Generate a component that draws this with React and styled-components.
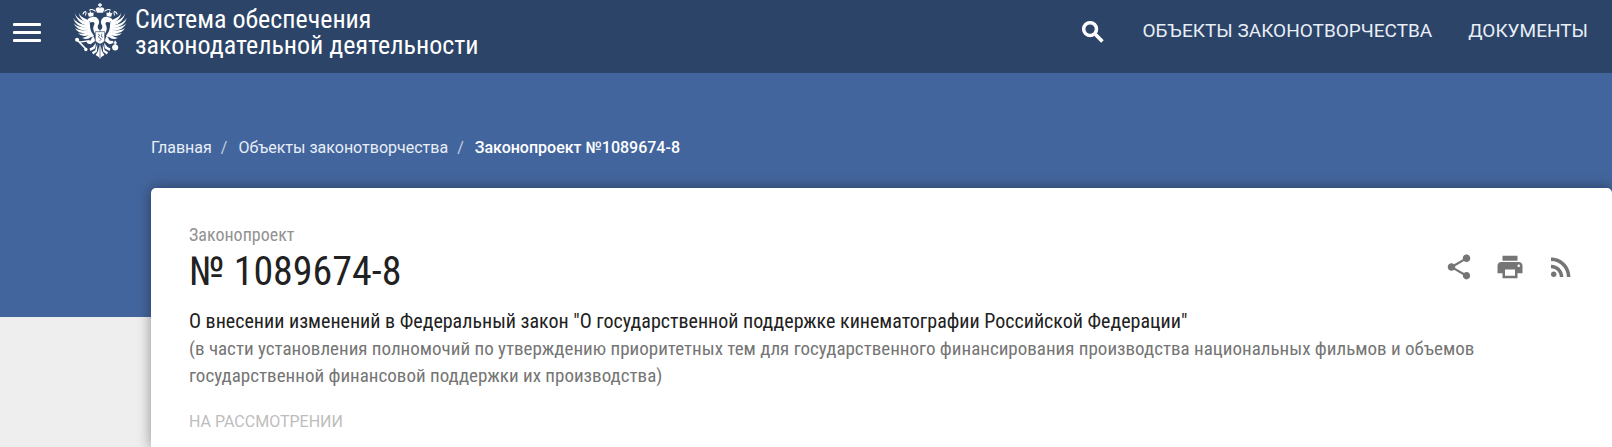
import React from "react";
import styled, { createGlobalStyle } from "styled-components";
import { MdSearch, MdShare, MdPrint, MdRssFeed } from "react-icons/md";

const condensed = `"Roboto Condensed", Roboto, "Liberation Sans", sans-serif`;

const GlobalStyle = createGlobalStyle`
  * {
    box-sizing: border-box;
  }

  body {
    margin: 0;
    background: #eeeeee;
    font-family: Roboto, "Liberation Sans", sans-serif;
    overflow-x: hidden;
  }
`;

const Header = styled.header`
  display: flex;
  align-items: flex-start;
  padding: 0 24px 0 13px;
  min-height: 73px;
  background: #2c4467;
  color: #fff;
`;

const IconButton = styled.button`
  display: flex;
  padding: 0;
  border: 0;
  background: none;
  color: inherit;
  cursor: pointer;
`;

const SearchButton = styled(IconButton)`
  padding-top: 2px;

  path:last-child {
    stroke: currentColor;
    stroke-width: 1;
  }
`;

const MenuButton = styled(IconButton)`
  flex-direction: column;
  gap: 5px;
  width: 28px;
  margin: 23px 32px 0 0;
`;

const MenuLine = styled.span`
  width: 100%;
  height: 3px;
  border-radius: 1px;
  background: #fff;
`;

const Brand = styled.a`
  display: flex;
  gap: 8px;
  padding-top: 3px;
  color: #fff;
  text-decoration: none;
`;

const EmblemSvg = styled.svg`
  width: 54px;
  height: 56px;
  flex: none;
`;

const BrandName = styled.span`
  padding-top: 3px;
  font-family: ${condensed};
  font-size: 26px;
  line-height: 26px;
`;

const Nav = styled.nav`
  display: flex;
  align-items: center;
  gap: 36px;
  margin: 16px 0 0 auto;
`;

const NavLink = styled.a`
  color: #e8eef7;
  font-size: 19px;
  line-height: 28px;
  text-transform: uppercase;
  text-decoration: none;
`;

const Hero = styled.div`
  height: 244px;
  padding: 64px 0 0 151px;
  background: #43659d;
`;

const Breadcrumbs = styled.nav`
  display: flex;
  font-size: 16px;
  line-height: 22px;
`;

const Crumb = styled.a`
  color: ${(props) => (props.$current ? "#fff" : "#e8eef7")};
  font-weight: ${(props) => (props.$current ? 500 : 400)};
  text-decoration: none;

  &:not(:last-child)::after {
    content: "/";
    margin: 0 11px 0 9px;
    color: #c3cfe2;
  }
`;

const Card = styled.main`
  position: relative;
  margin: -129px 0 0 151px;
  padding: 34px 36px 16px 38px;
  border-radius: 5px 5px 0 0;
  background: #fff;
  box-shadow: 0 0 14px rgba(0, 0, 0, 0.4);
  font-family: ${condensed};
`;

const CardTop = styled.div`
  display: flex;
  justify-content: space-between;
  align-items: flex-end;
`;

const Kind = styled.div`
  color: #929292;
  font-size: 18px;
  line-height: 26px;
`;

const Number = styled.h1`
  margin: 0;
  color: #212121;
  font-size: 40px;
  font-weight: 400;
  line-height: 48px;
`;

const Actions = styled.div`
  display: flex;
  gap: 21px;
  padding-bottom: 14px;
  color: #757575;
`;

const Title = styled.h2`
  margin: 12px 0 0;
  color: #212121;
  font-size: 20px;
  font-weight: 400;
  line-height: 27px;
`;

const Description = styled.p`
  max-width: 1300px;
  margin: 0;
  color: #757575;
  font-size: 19px;
  line-height: 27px;
`;

const Status = styled.div`
  margin-top: 23px;
  color: #bdbdbd;
  font-family: Roboto, "Liberation Sans", sans-serif;
  font-size: 16px;
  line-height: 20px;
  text-transform: uppercase;
`;

// left half of the eagle, mirrored for the right one
function EagleHalf() {
  return (
    <>
      {/* wing */}
      <path d="M4 28 Q10 44 28 52 L44 58 L38 66 Q12 58 4 28Z" />
      <path d="M17 29 Q22 41 38 48 L46 56 L36 56 Q20 48 17 29Z" />
      <path d="M0 44 Q10 62 40 66 L38 74 Q8 70 0 44Z" />
      <path d="M2 60 Q14 73 40 73 L40 81 Q12 82 2 60Z" />
      <path d="M6 75 Q18 84 42 80 L44 88 Q18 94 6 75Z" />
      <path d="M15 90 Q28 94 46 86 L49 94 Q28 104 15 90Z" />
      <path d="M27 103 Q38 103 50 92 L55 99 Q42 112 27 103Z" />
      <path d="M34 46 Q48 50 50 62 Q50 84 62 96 L56 102 Q38 88 36 62Z" />
      {/* head and neck */}
      <path d="M41 54 Q44 44 54 42 Q68 38 75 48 Q80 58 74 66 Q71 76 79 80 L79 92 L66 92 Q56 78 62 66 Q66 59 60 56 L52 57 L48 61 L49 54Z" />
      {/* small crown with its ribbon */}
      <path d="M43 28 L48 31 L51 24 L55 30 L61 28 L60 39 L47 41Z" />
      <circle cx="50" cy="21" r="2" />
      <path
        d="M67 25 Q59 17 50 20 M39 25 Q31 25 29 34 M39 27 L37 37"
        fill="none"
        stroke="#fff"
        strokeWidth="3"
      />
      {/* leg and tail */}
      <path d="M60 98 L67 112 L52 122 L43 120 L40 113 L51 112Z" />
      <path d="M68 118 L59 130 L49 135 L52 142 L66 134Z" />
      <path d="M72 120 L66 140 L56 146 L60 153 L71 144Z" />
      <path d="M79 122 L74 143 L67 154 L76 160 L79 166Z" />
    </>
  );
}

function Emblem() {
  return (
    <EmblemSvg viewBox="0 0 160 166" fill="#fff" aria-hidden="true">
      <EagleHalf />
      <g transform="translate(160 0) scale(-1 1)">
        <EagleHalf />
      </g>
      {/* big crown */}
      <path d="M78 0h4v4h4v4h-4v5h-4V8h-4V4h4Z" />
      <path d="M67 18 Q70 12 77 13 L80 16 L83 13 Q90 12 93 18 L89 29 H71Z" />
      {/* shield */}
      <path
        d="M66 85 H94 V112 Q92 118 80 122 Q68 118 66 112Z"
        stroke="#2c4467"
        strokeWidth="2"
      />
      <path
        d="M74 92 L79 95 L75 101 L84 107 L77 114 M86 91 L83 99 L89 102"
        fill="none"
        stroke="#2c4467"
        strokeWidth="2"
      />
      {/* scepter */}
      <path d="M13 110 L39 137" stroke="#fff" strokeWidth="5" />
      <circle cx="12" cy="109" r="6" />
      <path d="M18 116 L49 112" stroke="#fff" strokeWidth="4" />
      <circle cx="38" cy="138" r="5" />
      {/* orb */}
      <circle cx="125" cy="132" r="9" />
      <path d="M125 112 V126 M120 118 H130" stroke="#fff" strokeWidth="4" />
    </EmblemSvg>
  );
}

export default function App() {
  return (
    <>
      <GlobalStyle />
      <Header>
        <MenuButton aria-label="Меню">
          <MenuLine />
          <MenuLine />
          <MenuLine />
        </MenuButton>
        <Brand href="#">
          <Emblem />
          <BrandName>
            Система обеспечения
            <br />
            законодательной деятельности
          </BrandName>
        </Brand>
        <Nav>
          <SearchButton aria-label="Поиск">
            <MdSearch size={28} />
          </SearchButton>
          <NavLink href="#">Объекты законотворчества</NavLink>
          <NavLink href="#">Документы</NavLink>
        </Nav>
      </Header>
      <Hero>
        <Breadcrumbs>
          <Crumb href="#">Главная</Crumb>
          <Crumb href="#">Объекты законотворчества</Crumb>
          <Crumb href="#" $current>
            Законопроект №1089674-8
          </Crumb>
        </Breadcrumbs>
      </Hero>
      <Card>
        <CardTop>
          <div>
            <Kind>Законопроект</Kind>
            <Number>№ 1089674-8</Number>
          </div>
          <Actions>
            <IconButton aria-label="Поделиться">
              <MdShare size={30} />
            </IconButton>
            <IconButton aria-label="Печать">
              <MdPrint size={30} />
            </IconButton>
            <IconButton aria-label="RSS">
              <MdRssFeed size={30} />
            </IconButton>
          </Actions>
        </CardTop>
        <Title>
          О внесении изменений в Федеральный закон "О государственной поддержке
          кинематографии Российской Федерации"
        </Title>
        <Description>
          (в части установления полномочий по утверждению приоритетных тем для
          государственного финансирования производства национальных фильмов и
          объемов государственной финансовой поддержки их производства)
        </Description>
        <Status>На рассмотрении</Status>
      </Card>
    </>
  );
}
